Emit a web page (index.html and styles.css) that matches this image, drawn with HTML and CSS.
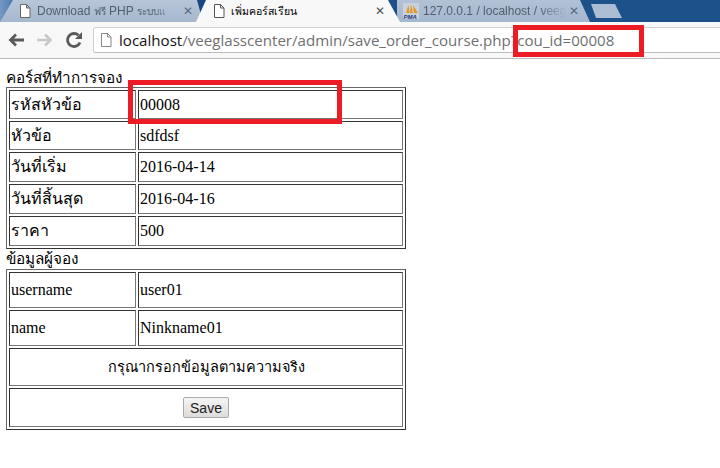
FILE: index.html
```html
<!DOCTYPE html>
<html lang="th">
<head>
<meta charset="utf-8">
<title>เพิ่มคอร์สเรียน</title>
<link rel="stylesheet" href="styles.css">
</head>
<body>
<header class="browser">
  <div class="tabstrip">
    <div class="tab tab-a">
      <svg class="favicon" viewBox="0 0 12 14"><path d="M1.500.5h6l3.500 3.500v9.500h-9.500z M7.500.5v3.500h3.500" fill="#fff" stroke="#666"/></svg>
      <span class="tab-title tab-fade">Download <span class="tab-thai">ฟรี</span> PHP <span class="tab-thai">ระบบแ</span></span>
      <span class="tab-x">✕</span>
    </div>
    <div class="tab tab-active">
      <svg class="favicon" viewBox="0 0 12 14"><path d="M1.500.5h6l3.500 3.500v9.500h-9.500z M7.500.5v3.500h3.500" fill="#fff" stroke="#555"/></svg>
      <span class="tab-title tab-title-active">เพิ่มคอร์สเรียน</span>
      <span class="tab-x tab-x-active">✕</span>
    </div>
    <div class="tab tab-b">
      <svg class="pma" viewBox="0 0 16 16"><rect width="16" height="16" fill="#c9d2dc"/><path d="M3 10l2.500-8 1 8zM7 10l1-9 2 9zM11 10l-1-8 5 8z" fill="#e8941e"/><text x="0.500" y="15.500" class="pma-text">PMA</text></svg>
      <span class="tab-title tab-fade">127.0.0.1 / localhost / veeg</span>
      <span class="tab-x">✕</span>
    </div>
    <div class="tab-new"></div>
  </div>
  <div class="toolbar">
    <svg class="nav" viewBox="0 0 18 18"><path d="M17 9H4M9 3.500L3.500 9 9 14.500" fill="none" stroke="#5a5a5a" stroke-width="2.800"/></svg>
    <svg class="nav" viewBox="0 0 18 18"><path d="M1 9h13M9 3.500L14.500 9 9 14.500" fill="none" stroke="#c8c8c8" stroke-width="2.600"/></svg>
    <svg class="nav" viewBox="0 0 18 18"><path d="M15 11.500A6.500 6.500 0 1 1 13.500 4.300" fill="none" stroke="#5a5a5a" stroke-width="2.800"/><path d="M10 8h7V1z" fill="#5a5a5a"/></svg>
    <div class="omnibox">
      <svg class="favicon" viewBox="0 0 12 14"><path d="M1.500.5h6l3.500 3.500v9.500h-9.500z M7.500.5v3.500h3.500" fill="#fff" stroke="#888"/></svg>
      <span class="url"><span class="host">localhost</span>/veeglasscenter/admin/save_order_course.php?cou_id=00008</span>
    </div>
  </div>
</header>
<main class="page">
  <div class="caption">คอร์สที่ทำการจอง</div>
  <table class="form">
    <tr class="r1"><td class="label">รหัสหัวข้อ</td><td>00008</td></tr>
    <tr class="r1"><td class="label">หัวข้อ</td><td>sdfdsf</td></tr>
    <tr class="r1b"><td class="label">วันที่เริ่ม</td><td>2016-04-14</td></tr>
    <tr class="r1b"><td class="label">วันที่สิ้นสุด</td><td>2016-04-16</td></tr>
    <tr class="r1b"><td class="label">ราคา</td><td>500</td></tr>
  </table>
  <div class="caption caption-next">ข้อมูลผู้จอง</div>
  <table class="form">
    <tr class="r2"><td class="label">username</td><td>user01</td></tr>
    <tr class="r2"><td class="label">name</td><td>Ninkname01</td></tr>
    <tr class="r3"><td colspan="2" class="center notice">กรุณากรอกข้อมูลตามความจริง</td></tr>
    <tr class="r4"><td colspan="2" class="center"><button class="save" type="button">Save</button></td></tr>
  </table>
</main>
<div class="mark mark-url"></div>
<div class="mark mark-cell"></div>
</body>
</html>
```
FILE: styles.css
```css
html, body { margin: 0; padding: 0; background: #fff; }
body { width: 720px; height: 468px; overflow: hidden; position: relative; font-family: "Liberation Serif", "Noto Sans CJK SC", serif; font-size: 16px; color: #000; }

.browser { height: 59px; }
.tabstrip { height: 22px; background: linear-gradient(90deg, #7398c4, #3a6ba3 20px, #15467f 210px, #1c5289 420px); display: flex; align-items: flex-start; }
.tab { height: 22px; display: flex; align-items: center; box-sizing: border-box; flex: none; position: relative; }
.tab-a { width: 203px; padding: 0 10px 0 19px; background: linear-gradient(#b7c6d8, #a6b8cf); clip-path: polygon(13px 0, 197px 0, 203px 100%, 0 100%); }
.tab-active { width: 204px; margin-left: -7px; padding: 0 15px 0 17px; background: #f8f8f8; clip-path: polygon(10px 0, 192px 0, 204px 100%, 0 100%); z-index: 1; }
.tab-b { width: 193px; margin-left: -3px; padding: 0 11px 0 6px; background: linear-gradient(#b2c2d6, #a3b7ce); clip-path: polygon(0 0, 183px 0, 193px 100%, 0 100%); }
.tab-new { width: 31px; height: 14px; margin: 4px 0 0 1px; background: #abbdd3; clip-path: polygon(0 0, 24px 0, 31px 100%, 5px 100%); }
.favicon { width: 12px; height: 14px; flex: none; }
.pma { width: 16px; height: 16px; flex: none; }
.pma-text { font: italic bold 6px "Liberation Sans", sans-serif; fill: #223a7a; }
.tab-title { flex: 1; min-width: 0; margin-left: 6px; white-space: nowrap; overflow: hidden; font: 12px "Liberation Sans", "Noto Sans CJK SC", sans-serif; color: #51606f; }
.tab-thai { font-size: 10px; }
.tab-fade { -webkit-mask-image: linear-gradient(90deg, #000 80%, transparent); mask-image: linear-gradient(90deg, #000 80%, transparent); margin-right: 2px; }
.tab-b .tab-title { margin-left: 4px; }
.tab-title-active { color: #000; font-size: 10.500px; }
.tab-x { flex: none; font: 12px "DejaVu Sans", sans-serif; color: #5b6b7c; }
.tab-x-active { color: #555; }

.toolbar { height: 37px; box-sizing: border-box; background: #f8f8f8; border-bottom: 1px solid #bcbcbc; display: flex; align-items: center; padding-left: 7px; gap: 11px; }
.nav { width: 18px; height: 18px; flex: none; }
.omnibox { flex: 1; margin-left: -1px; height: 26px; box-sizing: border-box; background: #fff; border: 1px solid #cfcfcf; border-bottom-color: #bdbdbd; border-right: 0; border-radius: 3px 0 0 3px; display: flex; align-items: center; padding-left: 6px; gap: 7px; }
.url { font: 15.100px "Open Sans", sans-serif; color: #6f6f6f; white-space: nowrap; }
.host { color: #111; }

.page { padding: 10px 0 0 6px; }
.caption { height: 18px; line-height: 18px; font-size: 15.300px; }
.caption-next { height: 20px; line-height: 20px; }
.form { width: 400px; border: 1px solid #666; border-right-color: #333; border-bottom-color: #333; border-spacing: 2px; box-sizing: border-box; table-layout: fixed; }
.form td { padding: 0 1px; border: 1px solid #333; border-right-color: #777; border-bottom-color: #777; box-sizing: border-box; line-height: 18px; }
.label { width: 127px; }
.notice { font-size: 14.500px; }
.r1 td { height: 29px; }
.r1b td { height: 30px; }
.r2 td { height: 36px; }
.r3 td { height: 38px; }
.r4 td { height: 39px; }
.center { text-align: center; }
.save { width: 46px; height: 21px; padding: 0; font: 14px "Liberation Sans", sans-serif; color: #222; background: linear-gradient(#f5f5f5, #dcdcdc); border: 1px solid #aaa; border-radius: 2px; }

.mark { position: absolute; box-sizing: border-box; border: 5px solid #ed1c24; }
.mark-url { left: 513px; top: 25px; width: 131px; height: 32px; }
.mark-cell { left: 128px; top: 80px; width: 214px; height: 44px; }
```
